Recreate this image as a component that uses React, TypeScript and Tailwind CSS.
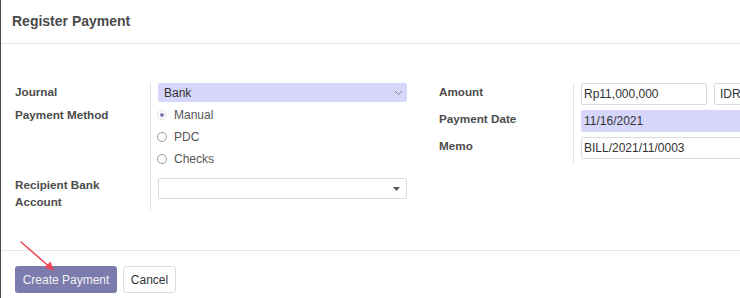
import React from "react";

const font = { fontFamily: '"Liberation Sans", Arial, sans-serif' };

function Radio({ label, checked }: { label: string; checked?: boolean }) {
  return (
    <div className="flex items-center h-[22px] gap-[7px]">
      <span
        className={`w-[10px] h-[10px] rounded-full border flex items-center justify-center ${checked ? "border-[#e2e2e2]" : "border-[#9a9a9a]"}`}
      >
        {checked && <span className="w-[4px] h-[4px] rounded-full bg-[#7d7cb0]" />}
      </span>
      <span className="text-[12px] text-[#555]">{label}</span>
    </div>
  );
}

function Label({ children, className = "" }: { children: React.ReactNode; className?: string }) {
  return <div className={`text-[11.7px] font-bold leading-[17px] text-[#4c4c4c] ${className}`}>{children}</div>;
}

export default function App() {
  return (
    <div style={font} className="w-[740px] h-[298px] overflow-hidden bg-white border-l border-[#4a4a4a] relative">
      <div className="h-[44px] px-[11px] flex items-center border-b border-[#e3e3e3]">
        <h1 className="text-[14px] font-bold text-[#4a4a4a]">Register Payment</h1>
      </div>

      <div className="pt-[39px] pb-[40px] pl-[14px] flex gap-[33px]">
        {/* left group */}
        <div className="grid grid-cols-[135px_256px]">
          <Label className="h-[19px]">Journal</Label>
          <div className="border-l border-[#e3e3e3] pl-[7px]">
            <div className="h-[19px] w-[249px] rounded-[2px] bg-[#d6d6fb] flex items-center justify-between pl-[6px] pr-[4px]">
              <span className="text-[12px] text-[#333]">Bank</span>
              <svg width="9" height="6" viewBox="0 0 9 6" fill="none">
                <path d="M1 1l3.5 3.5L8 1" stroke="#888" strokeWidth="1" />
              </svg>
            </div>
          </div>

          <Label className="pt-[4px]">Payment Method</Label>
          <div className="border-l border-[#e3e3e3] pl-[6px] pt-[2px]">
            <Radio label="Manual" checked />
            <Radio label="PDC" />
            <Radio label="Checks" />
          </div>

          <Label className="pt-[6px] pr-[40px]">Recipient Bank Account</Label>
          <div className="border-l border-[#e3e3e3] pl-[7px] pt-[8px]">
            <div className="h-[21px] w-[249px] rounded-[2px] border border-[#dcdcdc] bg-white flex items-center justify-end pr-[6px]">
              <svg width="7" height="4" viewBox="0 0 7 4">
                <path d="M0 0h7L3.5 4z" fill="#555" />
              </svg>
            </div>
          </div>
        </div>

        {/* right group */}
        <div className="grid grid-cols-[134px_300px] self-start">
          <Label className="h-[27px]">Amount</Label>
          <div className="border-l border-[#e3e3e3] pl-[7px] flex gap-[7px]">
            <div className="h-[22px] w-[126px] rounded-[2px] border border-[#dcdcdc] flex items-center pl-[2px] text-[12px] text-[#333]">
              Rp11,000,000
            </div>
            <div className="h-[22px] w-[60px] rounded-[2px] border border-[#dcdcdc] flex items-center pl-[5px] text-[12px] text-[#333]">
              IDR
            </div>
          </div>

          <Label className="h-[27px]">Payment Date</Label>
          <div className="border-l border-[#e3e3e3] pl-[7px]">
            <div className="h-[22px] w-[200px] rounded-[2px] bg-[#d6d6fb] flex items-center pl-[3px] text-[12px] text-[#333]">
              11/16/2021
            </div>
          </div>

          <Label className="h-[27px]">Memo</Label>
          <div className="border-l border-[#e3e3e3] pl-[7px] pb-[5px]">
            <div className="h-[22px] w-[200px] rounded-[2px] border border-[#dcdcdc] flex items-center pl-[2px] text-[12px] text-[#333]">
              BILL/2021/11/0003
            </div>
          </div>
        </div>
      </div>

      <div className="border-t border-[#e6e6e6] pt-[15px] pl-[14px] flex gap-[6px]">
        <button className="h-[27px] w-[102px] rounded-[3px] bg-[#7c7bad] text-[12px] text-[#f2f2f2]">
          Create Payment
        </button>
        <button className="h-[27px] w-[53px] rounded-[3px] border border-[#dcdcdc] bg-white text-[12px] text-[#333]">
          Cancel
        </button>
      </div>

      <svg className="absolute left-[18px] top-[240px]" width="40" height="34" viewBox="0 0 40 34" fill="none">
        <path d="M2 2L33 29" stroke="#f0475a" strokeWidth="1.6" strokeLinecap="round" />
        <path d="M35 31L25.5 27.5L31.5 21.5Z" fill="#f0475a" />
      </svg>
    </div>
  );
}
